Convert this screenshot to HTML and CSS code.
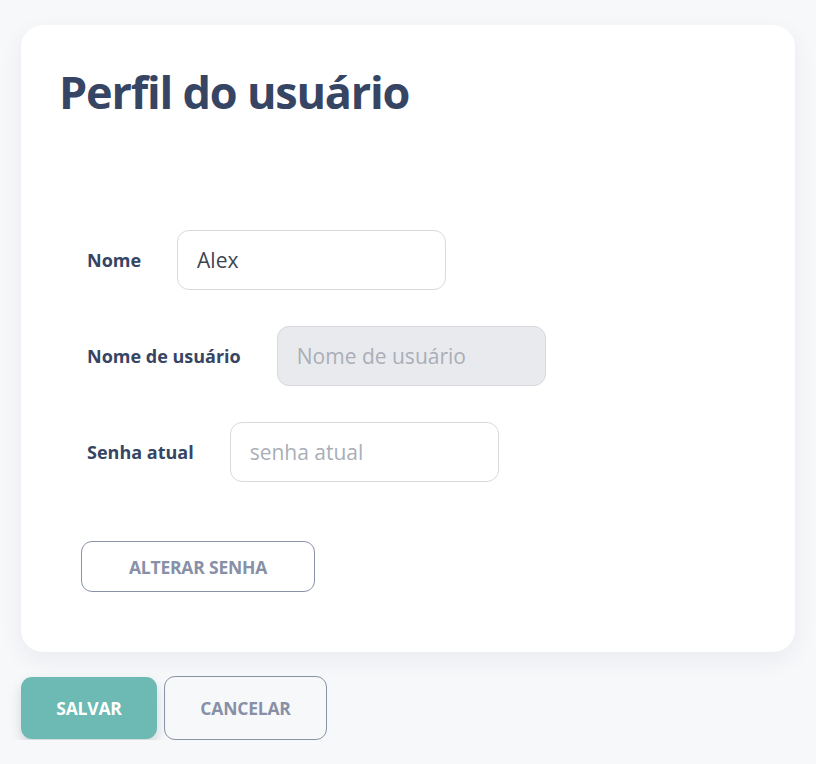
FILE: index.html
```html
<!DOCTYPE html>
<html>
<head>
    <meta charset="UTF-8">
    <title>Perfil do usuário</title>
    <link rel="stylesheet" href="styles.css">
</head>
<body>
<div class="profileCard">
    <h1 class="profileTitle">Perfil do usuário</h1>
    <form class="profileForm">
        <div class="formRow">
            <label class="formLabel" for="nome">Nome</label>
            <input class="formInput" id="nome" type="text" value="Alex">
        </div>
        <div class="formRow">
            <label class="formLabel" for="usuario">Nome de usuário</label>
            <input class="formInput" id="usuario" type="text" placeholder="Nome de usuário" disabled>
        </div>
        <div class="formRow">
            <label class="formLabel" for="senha">Senha atual</label>
            <input class="formInput" id="senha" type="password" placeholder="senha atual">
        </div>
        <button class="btnOutline btnPassword" type="button">Alterar senha</button>
    </form>
</div>
<div class="actions">
    <button class="btnSave" type="button">Salvar</button>
    <button class="btnOutline btnCancel" type="button">Cancelar</button>
</div>
</body>
</html>
```

FILE: styles.css
```css
html, body {
    margin: 0;
    background-color: #f7f8fa;
    font-family: "Open Sans", "Liberation Sans", sans-serif;
}

body {
    padding: 25px 21px 0 21px;
}

.profileCard {
    background-color: #fff;
    border-radius: 22px;
    padding: 38px 36px 60px 36px;
    box-shadow: 0 8px 24px rgba(30, 40, 60, 0.06);
}

.profileTitle {
    margin: 0 0 0 2px;
    font-size: 45px;
    font-weight: 700;
    letter-spacing: -1.2px;
    line-height: 58px;
    color: #364563;
}

.profileForm {
    padding: 109px 0 0 30px;
}

.formRow {
    display: flex;
    align-items: center;
    margin-bottom: 36px;
}

.formLabel {
    font-size: 18px;
    font-weight: 700;
    color: #364563;
    margin-right: 36px;
}

.formInput {
    width: 269px;
    height: 60px;
    box-sizing: border-box;
    border: 1px solid #d7d9de;
    border-radius: 12px;
    padding: 0 19px;
    font-family: "Open Sans", "Liberation Sans", sans-serif;
    font-size: 21px;
    color: #3d4452;
    background-color: #fff;
}

.formInput::placeholder {
    color: #a9aeb7;
}

.formInput:disabled {
    background-color: #e9eaee;
}

.btnOutline, .btnSave {
    font-family: "Open Sans", "Liberation Sans", sans-serif;
    font-size: 17.5px;
    font-weight: 700;
    text-transform: uppercase;
    letter-spacing: -0.2px;
    border-radius: 11px;
    cursor: pointer;
}

.btnOutline {
    background-color: transparent;
    border: 1px solid #8a92a8;
    color: #8790a6;
}

.btnPassword {
    margin: 23px 0 0 -6px;
    width: 234px;
    height: 51px;
}

.actions {
    display: flex;
    align-items: center;
    gap: 7px;
    padding-top: 24px;
}

.btnSave {
    width: 136px;
    height: 62px;
    border: none;
    background-color: #6cbab3;
    color: #fff;
    box-shadow: 0 6px 12px rgba(40, 60, 70, 0.18);
}

.btnCancel {
    width: 163px;
    height: 64px;
}
```
